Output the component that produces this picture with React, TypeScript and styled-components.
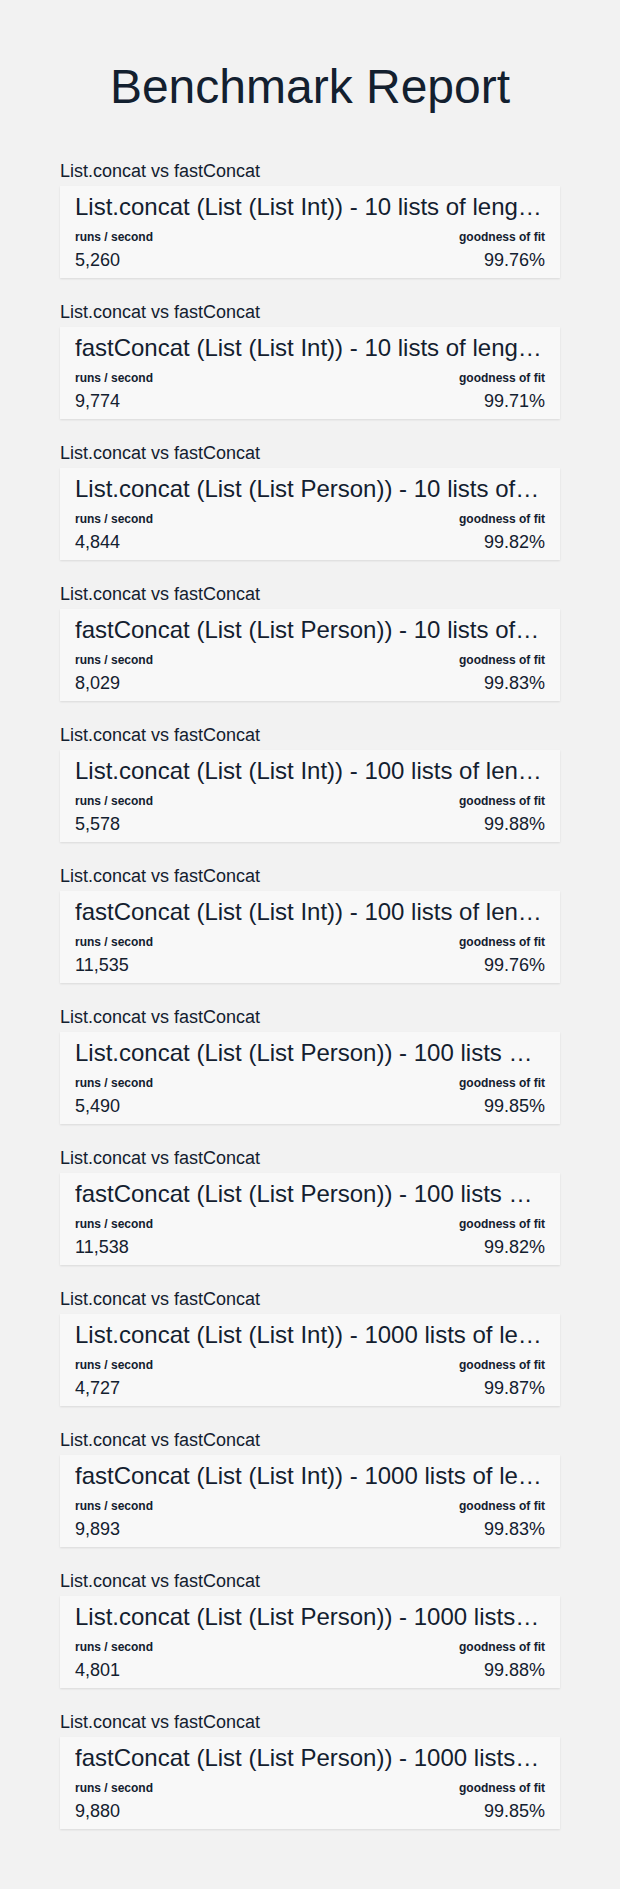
import React from "react";
import styled, { createGlobalStyle } from "styled-components";

const GlobalStyle = createGlobalStyle`
  html, body {
    margin: 0;
    padding: 0;
    background: #f2f2f2;
  }
  body {
    font-family: "Liberation Sans", Arial, sans-serif;
    color: #13202f;
  }
`;

const Page = styled.main`
  padding: 60px;
  display: flex;
  flex-direction: column;
`;

const Title = styled.h1`
  margin: 0 0 47px;
  font-size: 48px;
  line-height: 54px;
  font-weight: 400;
  text-align: center;
`;

const Groups = styled.div`
  display: flex;
  flex-direction: column;
  gap: 24px;
`;

const Group = styled.section`
  display: flex;
  flex-direction: column;
  gap: 5px;
`;

const GroupLabel = styled.h2`
  margin: 0;
  font-size: 18px;
  line-height: 20px;
  font-weight: 400;
`;

const Card = styled.div`
  background: #f8f8f8;
  box-shadow: 0 1px 2px rgba(0, 0, 0, 0.1);
  padding: 7px 15px 8px;
  display: flex;
  flex-direction: column;
  gap: 10px;
`;

const CardTitle = styled.h3`
  margin: 0;
  font-size: 24px;
  line-height: 27px;
  font-weight: 400;
  white-space: nowrap;
  overflow: hidden;
  text-overflow: ellipsis;
`;

const Stats = styled.div`
  display: flex;
  justify-content: space-between;
`;

const Stat = styled.div<{ $align: "left" | "right" }>`
  display: flex;
  flex-direction: column;
  gap: 6px;
  text-align: ${(p) => p.$align};
`;

const StatLabel = styled.div`
  font-size: 12px;
  line-height: 14px;
  font-weight: 700;
`;

const StatValue = styled.div`
  font-size: 18px;
  line-height: 20px;
`;

type Row = { name: string; runs: string; fit: string };

const rows: Row[] = [
  { name: "List.concat (List (List Int)) - 10 lists of length 10", runs: "5,260", fit: "99.76%" },
  { name: "fastConcat (List (List Int)) - 10 lists of length 10", runs: "9,774", fit: "99.71%" },
  { name: "List.concat (List (List Person)) - 10 lists of length 10", runs: "4,844", fit: "99.82%" },
  { name: "fastConcat (List (List Person)) - 10 lists of length 10", runs: "8,029", fit: "99.83%" },
  { name: "List.concat (List (List Int)) - 100 lists of length 10", runs: "5,578", fit: "99.88%" },
  { name: "fastConcat (List (List Int)) - 100 lists of length 10", runs: "11,535", fit: "99.76%" },
  { name: "List.concat (List (List Person)) - 100 lists of length 10", runs: "5,490", fit: "99.85%" },
  { name: "fastConcat (List (List Person)) - 100 lists of length 10", runs: "11,538", fit: "99.82%" },
  { name: "List.concat (List (List Int)) - 1000 lists of length 10", runs: "4,727", fit: "99.87%" },
  { name: "fastConcat (List (List Int)) - 1000 lists of length 10", runs: "9,893", fit: "99.83%" },
  { name: "List.concat (List (List Person)) - 1000 lists of length 10", runs: "4,801", fit: "99.88%" },
  { name: "fastConcat (List (List Person)) - 1000 lists of length 10", runs: "9,880", fit: "99.85%" },
];

export default function App() {
  return (
    <>
      <GlobalStyle />
      <Page>
        <Title>Benchmark Report</Title>
        <Groups>
          {rows.map((r, i) => (
            <Group key={i}>
              <GroupLabel>List.concat vs fastConcat</GroupLabel>
              <Card>
                <CardTitle>{r.name}</CardTitle>
                <Stats>
                  <Stat $align="left">
                    <StatLabel>runs / second</StatLabel>
                    <StatValue>{r.runs}</StatValue>
                  </Stat>
                  <Stat $align="right">
                    <StatLabel>goodness of fit</StatLabel>
                    <StatValue>{r.fit}</StatValue>
                  </Stat>
                </Stats>
              </Card>
            </Group>
          ))}
        </Groups>
      </Page>
    </>
  );
}
